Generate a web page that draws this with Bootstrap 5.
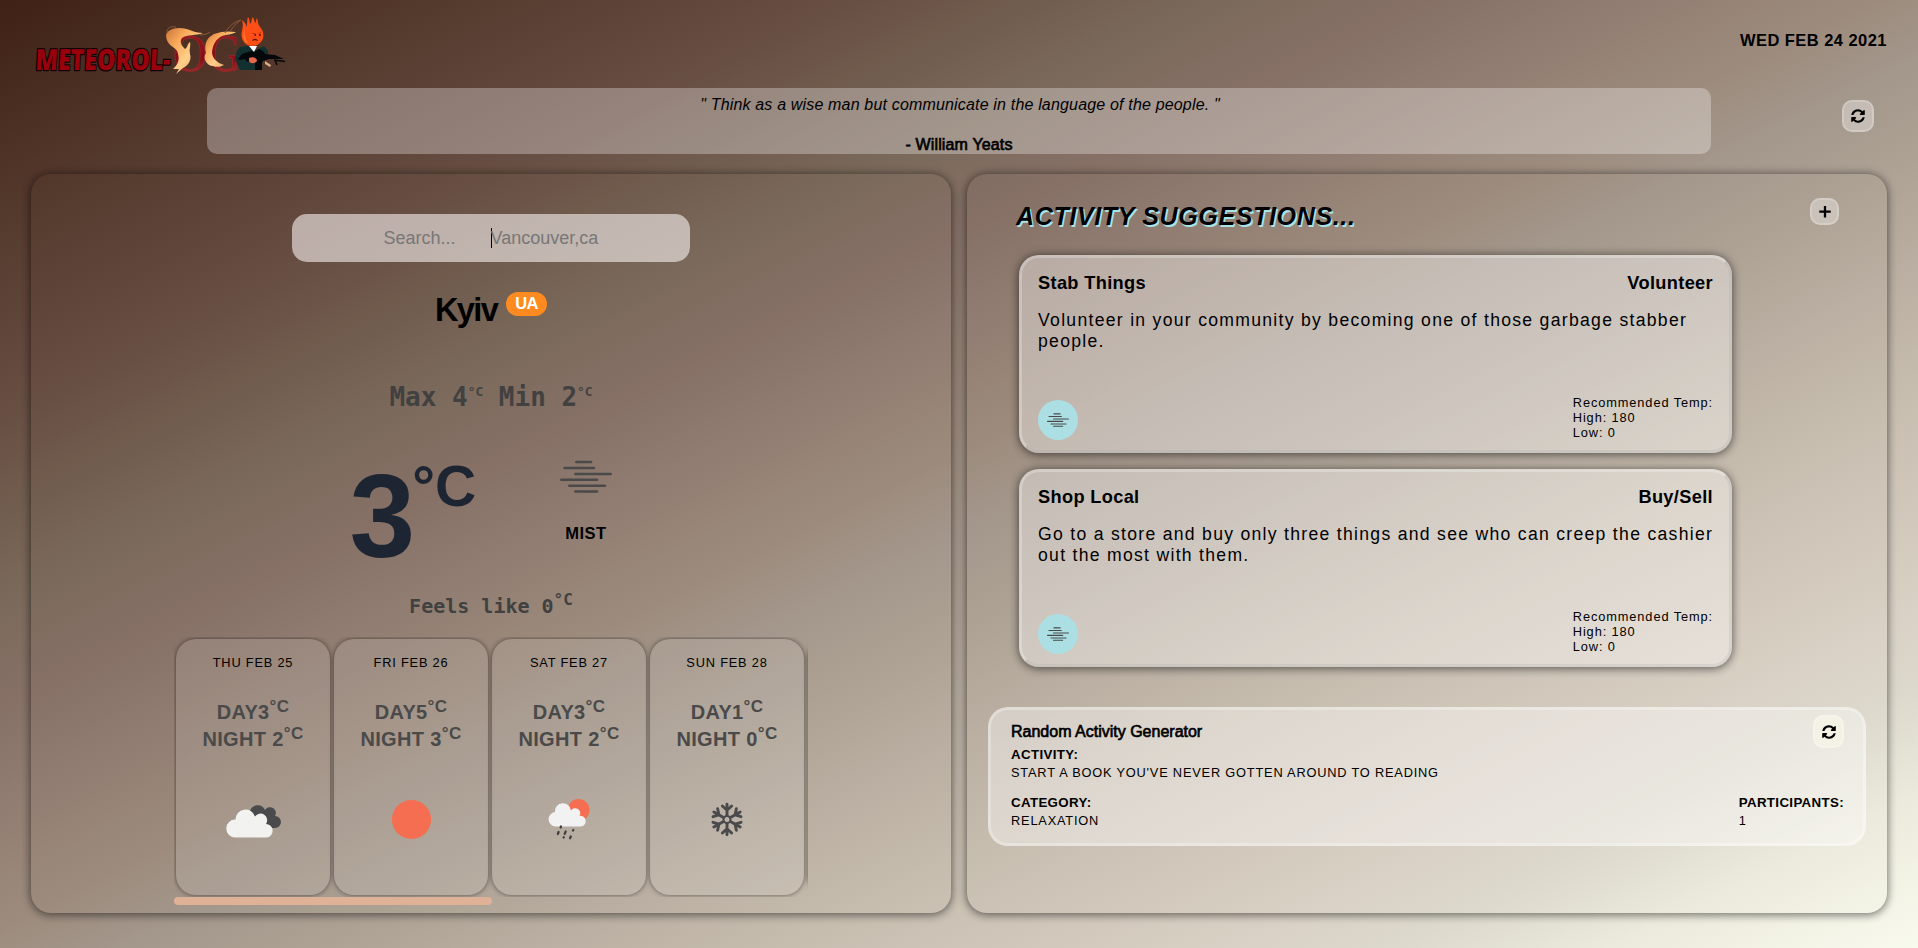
<!DOCTYPE html>
<html lang="en">
<head>
<meta charset="utf-8">
<meta name="viewport" content="width=device-width, initial-scale=1">
<title>Meteorol-OG</title>
<link href="https://cdn.jsdelivr.net/npm/bootstrap@5.3.0/dist/css/bootstrap.min.css" rel="stylesheet">
<style>
  body {
    min-height: 100vh; overflow: hidden; color: #000;
    font-family: "Liberation Sans", Arial, sans-serif; font-size: 16px; line-height: 20px;
    background: linear-gradient(to bottom right, #3f2115 0%, #695044 22.5%, #6f5a4c 26%, #7b6a5b 32%, #867066 37%, #9d8c7e 49%, #a3968a 53%, #ada194 58%, #c6bcae 70%, #d8cfc3 81%, #dcd8cb 86%, #ebeadc 92%, #f9faee 100%);
  }
  .heavy { -webkit-text-stroke: .65px currentColor; }
  .top-bar { height: 88px; padding: 0 31px; }
  .brand-art { width: 260px; height: 76px; margin: 12px 0 0 2px; }
  .today { margin-top: 30px; font-size: 16.5px; letter-spacing: .45px; }
  .quote-row { height: 66px; padding-left: 207px; }
  .quote-box { width: 1504px; background: rgba(255,255,255,.3); border-radius: 10px; }
  .quote-text { margin: 7px 0 0 2px; font-style: italic; letter-spacing: .17px; }
  .quote-by { margin-top: 20px; letter-spacing: .15px; }
  .mini-btn {
    display: flex; align-items: center; justify-content: center; padding: 0;
    border: 2px solid rgba(255,255,255,.2); border-radius: 10px; background: rgba(255,255,255,.35); color: #000;
  }
  .panels { margin: 20px 31px 0; gap: 16px; }
  .pane { height: 739px; border-radius: 20px; box-shadow: 0 0 10px rgba(0,0,0,.4), 0 3px 8px rgba(0,0,0,.25); }

  .finder { width: 398px; height: 48px; margin-top: 40px; border-radius: 15px; background: rgba(255,249,249,.57); font-size: 18px; color: #777; }
  .finder .hint { width: 107px; margin-left: 91.5px; }
  .finder .caret { width: 1px; height: 20px; margin-right: -1px; background: #000; }
  .place { margin-top: 28px; gap: 9px; font-size: 32.5px; line-height: 40px; font-weight: 700; letter-spacing: -1.6px; }
  .land { margin-top: 2px; width: 41px; height: 24px; border-radius: 12px; background: #ff8b20; color: #fff; font-size: 16.5px; line-height: 22px; letter-spacing: -.6px; text-align: center; }
  .mono { font-family: "DejaVu Sans Mono", monospace; font-weight: 700; color: #414141; white-space: pre; }
  .range { margin-top: 52px; font-size: 26px; line-height: 30px; }
  .up { line-height: 0; }
  .range .up { font-size: 12.8px; vertical-align: 10px; }
  .now { margin-top: 48px; height: 115px; gap: 61px; }
  .now-temp { width: 129px; padding-left: 1.5px; font-size: 118px; line-height: 113px; font-weight: 700; color: #1e2532; white-space: nowrap; }
  .now-temp .up { font-size: 57px; vertical-align: 51px; margin-left: -3px; }
  .now-sky { width: 96px; }
  .now-sky div { margin-top: 30px; font-size: 16.5px; letter-spacing: .5px; }
  .feels { margin-top: 19px; font-size: 20px; line-height: 24px; }
  .feels .up { font-size: 16px; vertical-align: 8.5px; }
  .strip { width: 634px; height: 260px; margin-top: 19px; padding: 2px; gap: 4px; overflow: hidden; }
  .day-card { flex: 0 0 154px; height: 256px; border-radius: 20px; background: rgba(255,255,255,.1); box-shadow: 0 0 5px rgba(0,0,0,.5); letter-spacing: .8px; }
  .day-name { margin-top: 15px; font-size: 12.8px; line-height: 18px; }
  .day-temps { margin-top: 27px; font-size: 20px; line-height: 27px; font-weight: 700; letter-spacing: .35px; color: #4a4a4a; }
  .day-temps .up { font-size: 17px; vertical-align: 6.7px; }
  .day-icon { margin-top: 37px; height: 60px; }
  .scroll-thumb { width: 318px; height: 8px; border-radius: 4px; background: #dfb297; }
  .strip-wrap { width: 634px; }

  .ideas-head { margin: 24px 48px 0 49px; height: 57px; }
  .ideas-title { margin: 3px 0 0; font-size: 25px; line-height: 30px; font-style: italic; font-weight: 700; letter-spacing: .65px; text-shadow: 1.6px 1.6px 0 #a8e3ea; }
  .idea { width: 713px; height: 198px; margin: 0 0 16px 52px; padding: 14px 16px 10px; border: 3px outset rgba(255,255,255,.25); border-radius: 20px; background: rgba(255,255,255,.38); box-shadow: 0 0 10px rgba(0,0,0,.4), 0 3px 8px rgba(0,0,0,.25); font-size: 17.6px; line-height: 22px; letter-spacing: 1.29px; }
  .idea-top { font-size: 18.2px; line-height: 23px; font-weight: 700; letter-spacing: .35px; }
  .idea-text { margin: 15px -4px 0 0; line-height: 21.3px; }
  .sky-dot { width: 40px; height: 40px; border-radius: 50%; background: #abdfe4; }
  .advice { font-size: 12.8px; line-height: 15px; letter-spacing: .9px; }
  .lucky { width: 878px; height: 139px; margin: 40px 0 0 21px; padding: 5px 19px 0 20px; border: 3px solid rgba(255,255,255,.28); border-radius: 20px; background: rgba(255,255,255,.4); font-size: 12.8px; line-height: 18px; letter-spacing: .8px; }
  .lucky-title { margin-top: 7px; font-size: 16px; line-height: 20px; letter-spacing: 0; }
  .lucky .fw-bold { font-size: 13.3px; letter-spacing: .35px; }
</style>
</head>
<body>
<svg class="d-none" xmlns="http://www.w3.org/2000/svg">
  <symbol id="mist" viewBox="0 0 52 33">
    <g fill="none" stroke="#4a4a4a" stroke-width="2.5" stroke-linecap="round"><path d="M16.3 2h14.8M4.6 8h29.4M15.3 14h35.4M1.3 19.8h35.8M9.3 25.8h35.7M15.3 31.4h21.8"/></g>
  </symbol>
  <symbol id="sync" viewBox="0 0 512 512">
    <path d="M371 137a168 168 0 0 0-278 70c-2 5-6 9-12 9H24c-7 0-13-7-12-14A248 248 0 0 1 428 80l36-36c15-15 41-4 41 17v134c0 13-11 24-24 24H347c-21 0-32-26-17-41zM31 296h134c21 0 32 26 17 41l-41 41a168 168 0 0 0 278-71c2-5 6-9 12-9h57c7 0 13 7 12 14A248 248 0 0 1 84 432l-36 36c-15 15-41 4-41-17V320c0-13 11-24 24-24z"/>
  </symbol>
</svg>

<header class="top-bar d-flex justify-content-between align-items-start">
  <svg class="brand-art overflow-visible" viewBox="33 12 260 76" role="img" aria-label="Meteorol-OG">
    <defs>
      <linearGradient id="fire" x1="0" y1="0" x2="1" y2="1"><stop offset="0" stop-color="#c8743a"/><stop offset=".3" stop-color="#f9a95a"/><stop offset=".6" stop-color="#ffd08a"/><stop offset="1" stop-color="#e08a50"/></linearGradient>
      <linearGradient id="ember" x1="0" y1="0" x2="0" y2="1"><stop offset="0" stop-color="#9a1a20"/><stop offset=".6" stop-color="#850d16"/><stop offset="1" stop-color="#a8443c"/></linearGradient>
    </defs>
    <text transform="translate(41 70) skewX(-3)" x="-6" y="0" font-family="'Open Sans', sans-serif" font-weight="800" font-size="29" textLength="135" lengthAdjust="spacingAndGlyphs" fill="#98000c" stroke="#120404" stroke-width="2.600" paint-order="stroke" stroke-linejoin="round">METEOROL-</text>
    <g font-family="'Liberation Serif', serif" fill="url(#ember)" stroke="#96262a" stroke-width="1">
      <text x="173" y="71" font-size="53" textLength="34" lengthAdjust="spacingAndGlyphs">O</text>
      <text x="209" y="71" font-size="53" textLength="32" lengthAdjust="spacingAndGlyphs">G</text>
    </g>
    <path fill="url(#fire)" d="M166 35C167 31 172 28 179 28C189 28 193 33 203 33C196 36 187 34 182 38C179 42 182 46 185 49C188 47 187 44 190 42C191 46 189 49 190 54C192 60 188 66 183 68L176 74L179 69L173 69C179 64 180 58 177 51C174 46 166 45 166 35z"/>
    <path fill="url(#fire)" d="M236 32C229 31 222 31 214 34C206 38 204 45 206 53C202 58 207 66 213 66C218 68 222 66 224 65C217 63 212 58 212 52C213 44 216 39 222 36C227 34 232 35 236 32z"/>
    <path fill="none" stroke="#8c5a3a" stroke-width="1" d="M167 33c0-5 3-7 9-6M200 35c4 0 7-1 10-3M225 33c4-7 9-11 16-13M230 32c3-6 7-9 11-12"/>
    <path fill="#12302f" d="M240 47l8-1 8 4 8-4 4 5v8l-8 2 1 9h-21l-4-9c-1-6 0-10 4-14z"/>
    <path fill="#fff" d="M249 46h8l-3 6z"/>
    <path fill="#05080a" d="M238 59l4-5 9-3 3 1 5-3 4 2 2 3 10 1 9 4h-7l-8 0-6 2-2 4h-3l-1-4-4-1-6 2-2-3-5 1zM255 61h7v9h-7z"/>
    <path fill="none" stroke="#05080a" stroke-width="1.500" d="M274 60l11 1.500M275 60l2 5M271 56v3"/>
    <path fill="#e8674d" d="M249 58c4-2 8 0 8 3-2 3-7 3-8 0z"/><path fill="#d9ae8a" d="M265 61l6 4-1 2-5-3z"/>
    <path fill="#ff4f16" d="M242 20C245 22 246 25 247 27C247 23 247 20 248 17C250 19 249 22 250.500 24C252 22 251 19 253 17C254.500 19 254 22 255.500 23C256 21 256 20 257 18C258 22 258 25 260 27C263 30 263.500 33 263.300 36C263 42 258 46 252 46C246 46 241.500 41 241.500 35C241.500 30 244 27 242 20z"/>
    <path fill="#ff7a2e" d="M245 28c-3 8-2 14 5 16-5-3-6-9-5-16z"/>
    <g fill="#6a0f08"><circle cx="255.300" cy="35" r=".9"/><circle cx="260" cy="35" r="1.100"/><path d="M252 41c1-3 5-3 6 0-2-1-4-1-6 0z"/></g>
    <g fill="none" stroke="#8a1c0a" stroke-width=".6"><path d="M252.500 33.500l3 .3M258.500 33.500l2.700-1"/></g>
  </svg>
  <div class="today fw-bold">WED FEB 24 2021</div>
</header>

<section class="quote-row d-flex align-items-start">
  <div class="quote-box h-100 text-center">
    <div class="quote-text">" Think as a wise man but communicate in the language of the people. "</div>
    <div class="quote-by heavy">- William Yeats</div>
  </div>
  <button class="mini-btn" style="width:32px;height:32px;margin:12px 0 0 131px" aria-label="New quote"><svg width="14" height="14"><use href="#sync"/></svg></button>
</section>

<main class="panels d-flex">
  <section class="pane w-50 d-flex flex-column align-items-center">
    <div class="finder d-flex align-items-center"><span class="hint">Search...</span><span class="caret"></span><span>Vancouver,ca</span></div>
    <div class="place d-flex align-items-start"><span>Kyiv</span><span class="land">UA</span></div>
    <div class="range mono">Max 4<span class="up">°C</span> Min 2<span class="up">°C</span></div>
    <div class="now d-flex align-items-start">
      <div class="now-temp">3<span class="up">°C</span></div>
      <div class="now-sky d-flex flex-column align-items-center"><svg width="52" height="33"><use href="#mist"/></svg><div class="fw-bold">MIST</div></div>
    </div>
    <div class="feels mono">Feels like 0<span class="up">°C</span></div>
    <div class="strip-wrap">
      <div class="strip d-flex">
        <article class="day-card text-center">
          <div class="day-name">THU FEB 25</div>
          <div class="day-temps">DAY3<span class="up">°C</span><br>NIGHT 2<span class="up">°C</span></div>
          <svg class="day-icon" width="60" viewBox="-3 -12 60 60">
            <path fill="#4a4a4c" d="M24 9a8 8 0 0 1 15-1 5.500 5.500 0 0 1 10 6 6 6 0 0 1 0 12h-12L24 16z"/>
            <path fill="#f2f2f1" d="M9 35.500A9 9 0 0 1 9.500 17.500 10 10 0 0 1 29 14.500a6 6 0 0 1 11 7.500 6.800 6.800 0 0 1 1 13.500z"/>
          </svg>
        </article>
        <article class="day-card text-center">
          <div class="day-name">FRI FEB 26</div>
          <div class="day-temps">DAY5<span class="up">°C</span><br>NIGHT 3<span class="up">°C</span></div>
          <svg class="day-icon" width="60" viewBox="0 0 60 60"><circle cx="30.500" cy="29.500" r="19.600" fill="#f66e51"/></svg>
        </article>
        <article class="day-card text-center">
          <div class="day-name">SAT FEB 27</div>
          <div class="day-temps">DAY3<span class="up">°C</span><br>NIGHT 2<span class="up">°C</span></div>
          <svg class="day-icon" width="60" viewBox="0 0 60 60">
            <circle cx="39.500" cy="20" r="11" fill="#f66e51"/>
            <path fill="#f2f2f2" d="M16 36.500a7.300 7.300 0 0 1 0-14.500 8 8 0 0 1 16-1.500 5 5 0 0 1 8.500 5.300 5.400 5.400 0 0 1 1.500 10.700z"/>
            <path stroke="#3f3f40" stroke-width="2.200" stroke-linecap="round" d="M22 36.500l-.4 1M19.600 42l-.8 2M26.700 41.500l-1 2.400M34.300 40l-.3.500M24.800 47.200l-.2.400M31.800 46.500l-.8 1.800"/>
          </svg>
        </article>
        <article class="day-card text-center">
          <div class="day-name">SUN FEB 28</div>
          <div class="day-temps">DAY1<span class="up">°C</span><br>NIGHT 0<span class="up">°C</span></div>
          <svg class="day-icon" width="60" viewBox="-30 -29.500 60 60">
            <defs><g id="arm"><path d="M0-4V-15.200M0-9.300l-4.600-4.200M0-9.300l4.600-4.200"/></g></defs>
            <g fill="none" stroke="#4a4a4c" stroke-width="2.900" stroke-linecap="round"><circle r="3.500" stroke-width="2"/>
              <use href="#arm"/><use href="#arm" transform="rotate(60)"/><use href="#arm" transform="rotate(120)"/><use href="#arm" transform="rotate(180)"/><use href="#arm" transform="rotate(240)"/><use href="#arm" transform="rotate(300)"/></g>
          </svg>
        </article>
        <article class="day-card"></article>
      </div>
      <div class="scroll-thumb"></div>
    </div>
  </section>

  <section class="pane w-50">
    <div class="ideas-head d-flex justify-content-between align-items-start">
      <h1 class="ideas-title">ACTIVITY SUGGESTIONS...</h1>
      <button class="mini-btn" style="width:29px;height:27px" aria-label="Add activity"><svg width="12" height="12" viewBox="0 0 12 12"><path stroke="#000" stroke-width="2.300" d="M6 0v11.400M.3 5.700h11.400"/></svg></button>
    </div>
    <article class="idea d-flex flex-column">
      <div class="idea-top d-flex justify-content-between"><span>Stab Things</span><span>Volunteer</span></div>
      <div class="idea-text">Volunteer in your community by becoming one of those garbage stabber people.</div>
      <div class="d-flex justify-content-between align-items-end mt-auto">
        <div class="sky-dot d-flex align-items-center justify-content-center"><svg width="22" height="14"><use href="#mist"/></svg></div>
        <div class="advice">Recommended Temp:<br>High: 180<br>Low: 0</div>
      </div>
    </article>
    <article class="idea d-flex flex-column">
      <div class="idea-top d-flex justify-content-between"><span>Shop Local</span><span>Buy/Sell</span></div>
      <div class="idea-text">Go to a store and buy only three things and see who can creep the cashier out the most with them.</div>
      <div class="d-flex justify-content-between align-items-end mt-auto">
        <div class="sky-dot d-flex align-items-center justify-content-center"><svg width="22" height="14"><use href="#mist"/></svg></div>
        <div class="advice">Recommended Temp:<br>High: 180<br>Low: 0</div>
      </div>
    </article>
    <article class="lucky">
      <div class="d-flex justify-content-between align-items-start" style="height:31px">
        <div class="lucky-title heavy">Random Activity Generator</div>
        <button class="mini-btn" style="width:31px;height:33px;background:#f3f2e5;border-color:#f6f5ec" aria-label="New activity"><svg width="14" height="14"><use href="#sync"/></svg></button>
      </div>
      <div class="fw-bold">ACTIVITY:</div>
      <div>START A BOOK YOU'VE NEVER GOTTEN AROUND TO READING</div>
      <div class="d-flex justify-content-between" style="margin-top:12px">
        <div><div class="fw-bold">CATEGORY:</div><div>RELAXATION</div></div>
        <div><div class="fw-bold">PARTICIPANTS:</div><div>1</div></div>
      </div>
    </article>
  </section>
</main>
<script src="https://cdn.jsdelivr.net/npm/bootstrap@5.3.0/dist/js/bootstrap.bundle.min.js"></script>
</body>
</html>
